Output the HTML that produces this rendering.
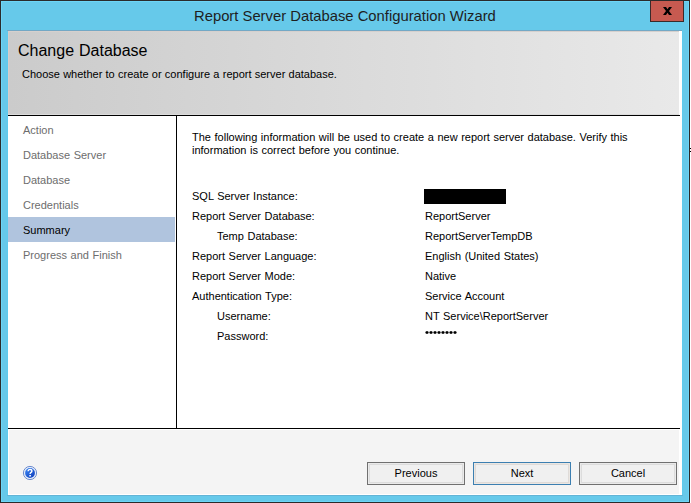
<!DOCTYPE html>
<html><head><meta charset="utf-8">
<style>
*{margin:0;padding:0;box-sizing:border-box}
html,body{width:691px;height:503px;overflow:hidden;background:#ffffff}
body{position:relative;font-family:"Liberation Sans",sans-serif;font-size:11px;color:#000;word-spacing:0.5px}
.a{position:absolute;white-space:nowrap}
#win{position:absolute;left:0;top:0;width:690px;height:503px;background:#66c9ea;border:1px solid #2b2b2b;box-shadow:inset 0 0 0 1px #6dd5f6}
#ft{position:absolute;left:7px;top:30px;width:675px;height:1px;background:#73a8c5}
#fb{position:absolute;left:7px;top:495px;width:676px;height:1px;background:#62b4d6}
#fl{position:absolute;left:7px;top:31px;width:1px;height:464px;background:#5ecbee}
#fr{position:absolute;left:682px;top:31px;width:1px;height:464px;background:#5ecbee}
#close{position:absolute;left:650px;top:1px;width:34px;height:21px;background:#c75a50;border:1px solid #3a2a2a;border-top:none}
#client{position:absolute;left:8px;top:31px;width:674px;height:464px;background:#fff}
#hdr{position:absolute;left:8px;top:31px;width:671px;height:84px;background:linear-gradient(to right,#cbcbcb,#e9e9e9);border-left:1px solid #d5cecb;border-top:1px solid #d6d0cd}
#hdrline{position:absolute;left:8px;top:114px;width:671px;height:1px;background:#dcdcdc}
#hline1{position:absolute;left:8px;top:115px;width:672px;height:1px;background:#000}
#vline{position:absolute;left:176px;top:115px;width:1px;height:314px;background:#000}
#hline2{position:absolute;left:8px;top:428px;width:672px;height:1px;background:#000}
#foot{position:absolute;left:9px;top:430px;width:670px;height:64px;background:#f4f4f4}
#sel{position:absolute;left:8px;top:217px;width:167px;height:25px;background:#b0c4de}
.nav{color:#6d6d6d}
.btn{position:absolute;top:462px;width:98px;height:23px;border:1px solid #707070;background:#f0f0f0;text-align:center;line-height:19px;font-size:11px;padding-top:1px}
.btn::before{content:"";position:absolute;left:0;top:0;right:0;bottom:0;border:1px solid #eaeaea;box-shadow:inset 0 0 0 1px #dcdcdc}
.btn.def::before{border-color:#ebe7e3;box-shadow:inset 0 0 0 1px #dfdbd8}
.btn span{position:relative}
.ast{position:absolute;top:330px;width:3px;height:3px}
</style></head>
<body>
<div id="win"></div>
<div id="close"></div>
<svg style="position:absolute;left:663px;top:7px" width="9" height="8" viewBox="0 0 9 8"><path d="M0 0H3L4.5 2.2L6 0H9L6 4L9 8H6L4.5 5.8L3 8H0L3 4Z" fill="#000"/></svg>
<div class="a" style="left:194px;top:7.5px;font-size:14.8px;word-spacing:0;color:#1e1e1e">Report Server Database Configuration Wizard</div>
<div id="ft"></div><div id="fb"></div><div id="fl"></div><div id="fr"></div>
<div id="client"></div>
<div id="hdr"></div>
<div id="hdrline"></div>
<div class="a" style="left:18px;top:42px;font-size:16px">Change Database</div>
<div class="a" style="left:22px;top:68px;font-size:11px;word-spacing:0.2px">Choose whether to create or configure a report server database.</div>
<div id="hline1"></div>
<div id="vline"></div>
<div id="hline2"></div>
<div id="foot"></div>
<div id="sel"></div>
<div class="a nav" style="left:23px;top:124px">Action</div>
<div class="a nav" style="left:23px;top:149px">Database Server</div>
<div class="a nav" style="left:23px;top:174px">Database</div>
<div class="a nav" style="left:23px;top:199px">Credentials</div>
<div class="a" style="left:23px;top:224px;color:#000">Summary</div>
<div class="a nav" style="left:23px;top:249px">Progress and Finish</div>

<div class="a" style="left:192px;top:131px;line-height:13px">The following information will be used to create a new report server database. Verify this<br>information is correct before you continue.</div>

<div class="a" style="left:192px;top:190px">SQL Server Instance:</div>
<div class="a" style="left:192px;top:210px">Report Server Database:</div>
<div class="a" style="left:217px;top:230px">Temp Database:</div>
<div class="a" style="left:192px;top:250px">Report Server Language:</div>
<div class="a" style="left:192px;top:270px">Report Server Mode:</div>
<div class="a" style="left:192px;top:290px">Authentication Type:</div>
<div class="a" style="left:217px;top:310px">Username:</div>
<div class="a" style="left:217px;top:330px">Password:</div>

<div style="position:absolute;left:424px;top:189px;width:82px;height:15px;background:#000"></div>
<div class="a" style="left:425px;top:210px">ReportServer</div>
<div class="a" style="left:425px;top:230px">ReportServerTempDB</div>
<div class="a" style="left:425px;top:250px">English (United States)</div>
<div class="a" style="left:425px;top:270px">Native</div>
<div class="a" style="left:425px;top:290px">Service Account</div>
<div class="a" style="left:425px;top:310px">NT Service\ReportServer</div>
<svg style="position:absolute;left:424px;top:329px" width="36" height="6" viewBox="0 0 36 6"><rect x="1" y="2" width="4" height="3" fill="#d0d0d0"/><rect x="1" y="3" width="4" height="1" fill="#666"/><rect x="2" y="2" width="2" height="3" fill="#3a3a3a"/><rect x="2" y="3" width="2" height="1" fill="#000"/><rect x="5" y="2" width="4" height="3" fill="#d0d0d0"/><rect x="5" y="3" width="4" height="1" fill="#666"/><rect x="6" y="2" width="2" height="3" fill="#3a3a3a"/><rect x="6" y="3" width="2" height="1" fill="#000"/><rect x="9" y="2" width="4" height="3" fill="#d0d0d0"/><rect x="9" y="3" width="4" height="1" fill="#666"/><rect x="10" y="2" width="2" height="3" fill="#3a3a3a"/><rect x="10" y="3" width="2" height="1" fill="#000"/><rect x="13" y="2" width="4" height="3" fill="#d0d0d0"/><rect x="13" y="3" width="4" height="1" fill="#666"/><rect x="14" y="2" width="2" height="3" fill="#3a3a3a"/><rect x="14" y="3" width="2" height="1" fill="#000"/><rect x="17" y="2" width="4" height="3" fill="#d0d0d0"/><rect x="17" y="3" width="4" height="1" fill="#666"/><rect x="18" y="2" width="2" height="3" fill="#3a3a3a"/><rect x="18" y="3" width="2" height="1" fill="#000"/><rect x="21" y="2" width="4" height="3" fill="#d0d0d0"/><rect x="21" y="3" width="4" height="1" fill="#666"/><rect x="22" y="2" width="2" height="3" fill="#3a3a3a"/><rect x="22" y="3" width="2" height="1" fill="#000"/><rect x="25" y="2" width="4" height="3" fill="#d0d0d0"/><rect x="25" y="3" width="4" height="1" fill="#666"/><rect x="26" y="2" width="2" height="3" fill="#3a3a3a"/><rect x="26" y="3" width="2" height="1" fill="#000"/><rect x="29" y="2" width="4" height="3" fill="#d0d0d0"/><rect x="29" y="3" width="4" height="1" fill="#666"/><rect x="30" y="2" width="2" height="3" fill="#3a3a3a"/><rect x="30" y="3" width="2" height="1" fill="#000"/></svg>

<svg style="position:absolute;left:22px;top:465px" width="16" height="16" viewBox="0 0 16 16">
<defs><linearGradient id="hg" x1="0" y1="0" x2="1" y2="1"><stop offset="0" stop-color="#3d8af7"/><stop offset="1" stop-color="#0a37b8"/></linearGradient></defs>
<circle cx="8" cy="8" r="6.6" fill="#e6eefa" stroke="#5d7fc8" stroke-width="0.9"/>
<circle cx="8" cy="8" r="4.9" fill="url(#hg)"/>
<path d="M6.1 6.3 Q6.2 4.4 8.1 4.4 Q10 4.5 9.9 6.1 Q9.8 7.1 8.8 7.6 Q8.1 8 8.1 9" fill="none" stroke="#fff" stroke-width="1.4"/>
<rect x="7.3" y="10" width="1.6" height="1.5" fill="#fff"/>
</svg>

<div class="btn" style="left:367px"><span>Previous</span></div>
<div class="btn def" style="left:473px;border-color:#3c7fb1"><span>Next</span></div>
<div class="btn" style="left:579px"><span>Cancel</span></div>
<div style="position:absolute;left:690px;top:148px;width:1px;height:1px;background:#000"></div><div style="position:absolute;left:690px;top:151px;width:1px;height:1px;background:#000"></div>
</body></html>
